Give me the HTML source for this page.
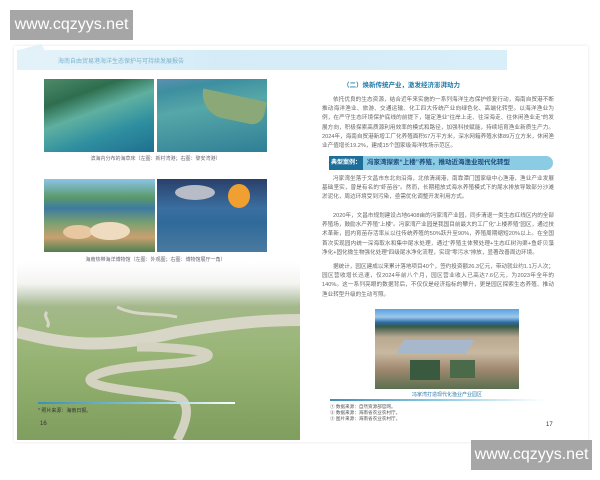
<!DOCTYPE html>
<html><head><meta charset="utf-8"><style>
*{margin:0;padding:0;box-sizing:border-box}
body{width:600px;height:480px;background:#fff;position:relative;overflow:hidden;font-family:"Liberation Sans","Noto Sans CJK SC",sans-serif}
.a{position:absolute}
.wm{background:#a6a6a6;color:#fff;font-size:16px;line-height:30px;text-align:center}
.t{font-size:5.6px;line-height:9.2px;color:#666;text-align:justify;text-indent:11px}
.cap{font-size:5px;color:#667;text-align:center}
</style></head><body>
<div class="a" style="left:14px;top:46px;width:574px;height:396px;background:#fff;box-shadow:0 0 3px #e4e4e4"></div>
<div class="a" style="left:17px;top:50px;width:490px;height:20px;background:linear-gradient(90deg,#e6f3fa,#d5ecf7 40%,#d8eef8)"></div>
<div class="a" style="left:17px;top:44px;width:30px;height:26px;background:#e3f1f8;clip-path:polygon(0 25%,80% 0,100% 40%,100% 100%,0 100%)"></div>
<div class="a" style="left:58px;top:56px;font-size:6px;color:#7fb3cc">海南自由贸易港海洋生态保护与可持续发展报告</div>
<div class="a wm" style="left:10px;top:10px;width:123px;height:30px">www.cqzyys.net</div>

<!-- left images -->
<div class="a" style="left:44px;top:79px;width:110px;height:73px;background:linear-gradient(160deg,#4d8a6a 0%,#2e6e4e 25%,#5fb0a0 45%,#2f8fa0 70%,#1f6f90)"></div>
<div class="a" style="left:157px;top:79px;width:110px;height:73px;background:linear-gradient(170deg,#5c8fb0 0%,#3d8fa0 15%,#56a7a8 40%,#2f7f96 100%)"></div>
<div class="a" style="left:200px;top:95px;width:65px;height:25px;background:#8aa878;border-radius:0 0 20px 40px;transform:rotate(12deg)"></div>
<div class="cap a" style="left:44px;top:155px;width:223px">滨海内分布的海草床（左图：新村湾港；右图：黎安湾港）</div>
<div class="a" style="left:44px;top:179px;width:111px;height:73px;background:linear-gradient(180deg,#8cc4e8 0%,#5a9a6a 25%,#3d7aa0 40%,#7aa070 60%,#c9a070 80%,#4e8050)"></div>
<div class="a" style="left:63px;top:225px;width:30px;height:14px;background:#e8c8a0;border-radius:50%"></div>
<div class="a" style="left:90px;top:222px;width:40px;height:18px;background:#efdcc0;border-radius:50%"></div>
<div class="a" style="left:157px;top:179px;width:110px;height:73px;background:linear-gradient(180deg,#2a3f6a 0%,#3a6fa0 40%,#2f6a9a 60%,#4a7aa0 100%)"></div>
<div class="a" style="left:228px;top:184px;width:22px;height:24px;background:#f0a030;border-radius:50%"></div>
<div class="a" style="left:175px;top:185px;width:40px;height:15px;background:#b8bcc6;border-radius:50%"></div>
<div class="cap a" style="left:44px;top:256px;width:223px">海南热带海洋博物馆（左图：外观图；右图：博物馆展厅一角）</div>
<!-- big photo -->
<div class="a" style="left:17px;top:262px;width:283px;height:178px;background:linear-gradient(180deg,#fff 0%,#f4f5f2 12%,#d0d8c8 18%,#a3b88a 25%,#9cb77a 45%,#8eac6a 70%,#7f9e5f 100%)"></div>
<svg class="a" style="left:17px;top:262px" width="283" height="178" viewBox="0 0 283 178">
<path d="M0 70 C40 80 80 90 160 70 C220 60 250 58 283 58" stroke="#d8d6c6" stroke-width="12" fill="none"/>
<path d="M120 85 C150 85 200 88 190 95 C170 105 100 100 75 115 C60 125 130 130 160 135 C175 140 170 160 160 178" stroke="#d4d2c0" stroke-width="9" fill="none"/>
<path d="M100 45 C120 55 140 50 160 55" stroke="#d8d6c6" stroke-width="3" fill="none"/>
<path d="M30 50 C25 55 35 60 30 65" stroke="#d8d6c6" stroke-width="3" fill="none"/>
</svg>
<div class="a" style="left:38px;top:402px;width:197px;height:2px;background:linear-gradient(90deg,#3a8fb8,#7fc0d8,#fff)"></div>
<div class="a" style="left:38px;top:407px;font-size:5px;color:#333">* 照片来源：海南日报。</div>
<div class="a" style="left:40px;top:421px;font-size:6px;color:#333">16</div>

<!-- right page -->
<div class="a" style="left:343px;top:79px;font-size:6.5px;font-weight:bold;color:#1f7aa8">（二）焕新传统产业，激发经济澎湃动力</div>
<div class="a t" style="left:322px;top:96px;width:232px">依托优良的生态资源，结合近年来实施的一系列海洋生态保护修复行动，海南自贸港不断推动海洋渔业、旅游、交通运输、化工四大传统产业向绿色化、高端化转型。以海洋渔业为例，在严守生态环境保护底线的前提下，锚定渔业“往岸上走、往深海走、往休闲渔业走”的发展方向，积极探索高质源利用效率的模式和路径，加强科技赋能，持续培育渔业新质生产力。2024年，海南自贸港新增工厂化养殖面积67万平方米，深水网箱养殖水体89万立方米，休闲渔业产值增长19.2%，建成15个国家级海洋牧场示范区。</div>
<div class="a" style="left:329px;top:156px;width:224px;height:14px;background:#8ccbe4;border-radius:0 7px 7px 0"></div>
<div class="a" style="left:329px;top:156px;width:34px;height:14px;background:#1e6e9a;color:#fff;font-size:6px;font-weight:bold;line-height:14px;text-align:center">典型案例：</div>
<div class="a" style="left:367px;top:156px;font-size:6.5px;font-weight:bold;color:#1a4a7a;line-height:14px">冯家湾探索“上楼”养殖，推动近海渔业现代化转型</div>
<div class="a t" style="left:322px;top:175px;width:232px">冯家湾坐落于文昌市东北向沿海，北依清澜港，南靠潭门国家级中心渔港，渔业产业发展基础坚实，曾是有名的“虾苗谷”。然而，长期粗放式海水养殖模式下的尾水排放导致部分沙滩淤泥化，周边环境受到污染，亟需优化调整开发利用方式。</div>
<div class="a t" style="left:322px;top:212px;width:232px">2020年，文昌市规划建设占地6408亩的冯家湾产业园，同步清退一类生态红线区内的全部养殖场，鼓励水产养殖“上楼”。冯家湾产业园是我国目前最大的工厂化“上楼养殖”园区，通过技术革新，园内育苗存活率从以往传统养殖的50%跃升至90%，养殖周期缩短20%以上。在全国首次实现园内统一深海取水和集中尾水处理，通过“养殖主体预处理+生态红树沟渠+鱼虾贝藻净化+固化微生物强化处理”四级尾水净化流程，实现“零污水”排放，显著改善周边环境。</div>
<div class="a t" style="left:322px;top:263px;width:232px">据统计，园区建成以来累计落地项目40个，签约投资额26.3亿元，带动就业约1.1万人次；园区营收增长迅速，仅2024年前八个月，园区营业收入已高达7.6亿元，为2023年全年的140%。这一系列亮眼的数据背后，不仅仅是经济指标的攀升，更是园区探索生态养殖、推动渔业转型升级的生动写照。</div>
<div class="a" style="left:375px;top:309px;width:144px;height:80px;background:linear-gradient(180deg,#5aa0e0 0%,#9cc8ec 10%,#2a6aa0 17%,#3a5a48 22%,#b8a890 35%,#c8b8a0 55%,#a08870 75%,#5a7050 100%)"></div>
<div class="a" style="left:400px;top:340px;width:70px;height:14px;background:#a8b8cc;transform:skewX(-30deg)"></div>
<div class="a" style="left:410px;top:360px;width:30px;height:20px;background:#3a5a40"></div>
<div class="a" style="left:450px;top:360px;width:25px;height:18px;background:#4a6a4a"></div>
<div class="cap a" style="left:375px;top:391px;width:144px;color:#2a7aaa">冯家湾打造现代化渔业产业园区</div>
<div class="a" style="left:330px;top:399px;width:215px;height:2px;background:linear-gradient(90deg,#3a8fb8,#8ccbe4,#fff)"></div>
<div class="a" style="left:330px;top:404px;font-size:4.6px;line-height:6px;color:#555">① 数据来源：自然资源部官网。<br>② 数据来源：海南省农业农村厅。<br>③ 图片来源：海南省农业农村厅。</div>
<div class="a" style="left:546px;top:422px;font-size:6px;color:#333">17</div>
<div class="a wm" style="left:471px;top:440px;width:121px;height:30px">www.cqzyys.net</div>
</body></html>
